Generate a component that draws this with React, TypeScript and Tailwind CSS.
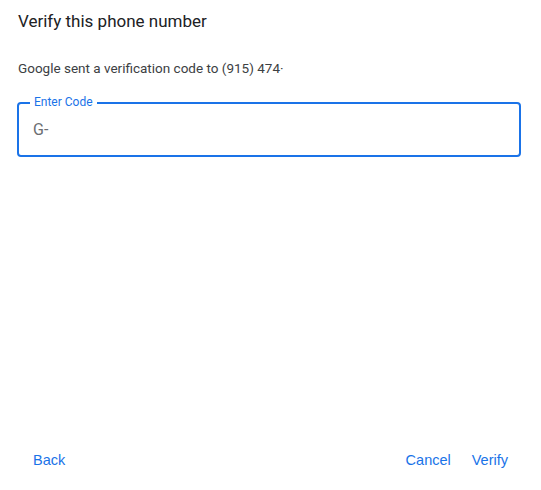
import { useState } from "react";

export default function App() {
  const [code, setCode] = useState("G-");

  return (
    <div className="flex h-[490px] w-[541px] flex-col bg-white font-['Roboto',sans-serif]">
      <div className="pl-[18px] pr-[20px] pt-[9px]">
        <h1 className="text-[17px] leading-[24px] font-normal text-[#202124]">
          Verify this phone number
        </h1>
        <p className="mt-[25px] text-[13.5px] leading-[20px] text-[#3c4043]">
          Google sent a verification code to (915) 474·
        </p>

        {/* notched outlined field */}
        <div className="relative -ml-px mt-[24px] w-[504px]">
          <label
            htmlFor="code"
            className="absolute left-[13px] top-[-7px] bg-white px-[4px] text-[12px] leading-[14px] text-[#1a73e8]"
          >
            Enter Code
          </label>
          <input
            id="code"
            type="text"
            value={code}
            onChange={(e) => setCode(e.target.value)}
            className="h-[55px] w-full rounded-[4px] border-2 border-[#1a73e8] px-[14px] text-[16px] text-[#6b6e72] outline-none"
          />
        </div>
      </div>

      <div className="mt-auto flex items-center justify-between pb-[12px] pl-[17px] pr-[25px] font-['Liberation_Sans',sans-serif] text-[14.5px] text-[#1a73e8]">
        <button className="h-[36px] px-[16px] leading-[20px]">Back</button>
        <div className="flex items-center gap-[5px]">
          <button className="h-[36px] px-[8px] leading-[20px]">Cancel</button>
          <button className="h-[36px] px-[8px] leading-[20px]">Verify</button>
        </div>
      </div>
    </div>
  );
}
